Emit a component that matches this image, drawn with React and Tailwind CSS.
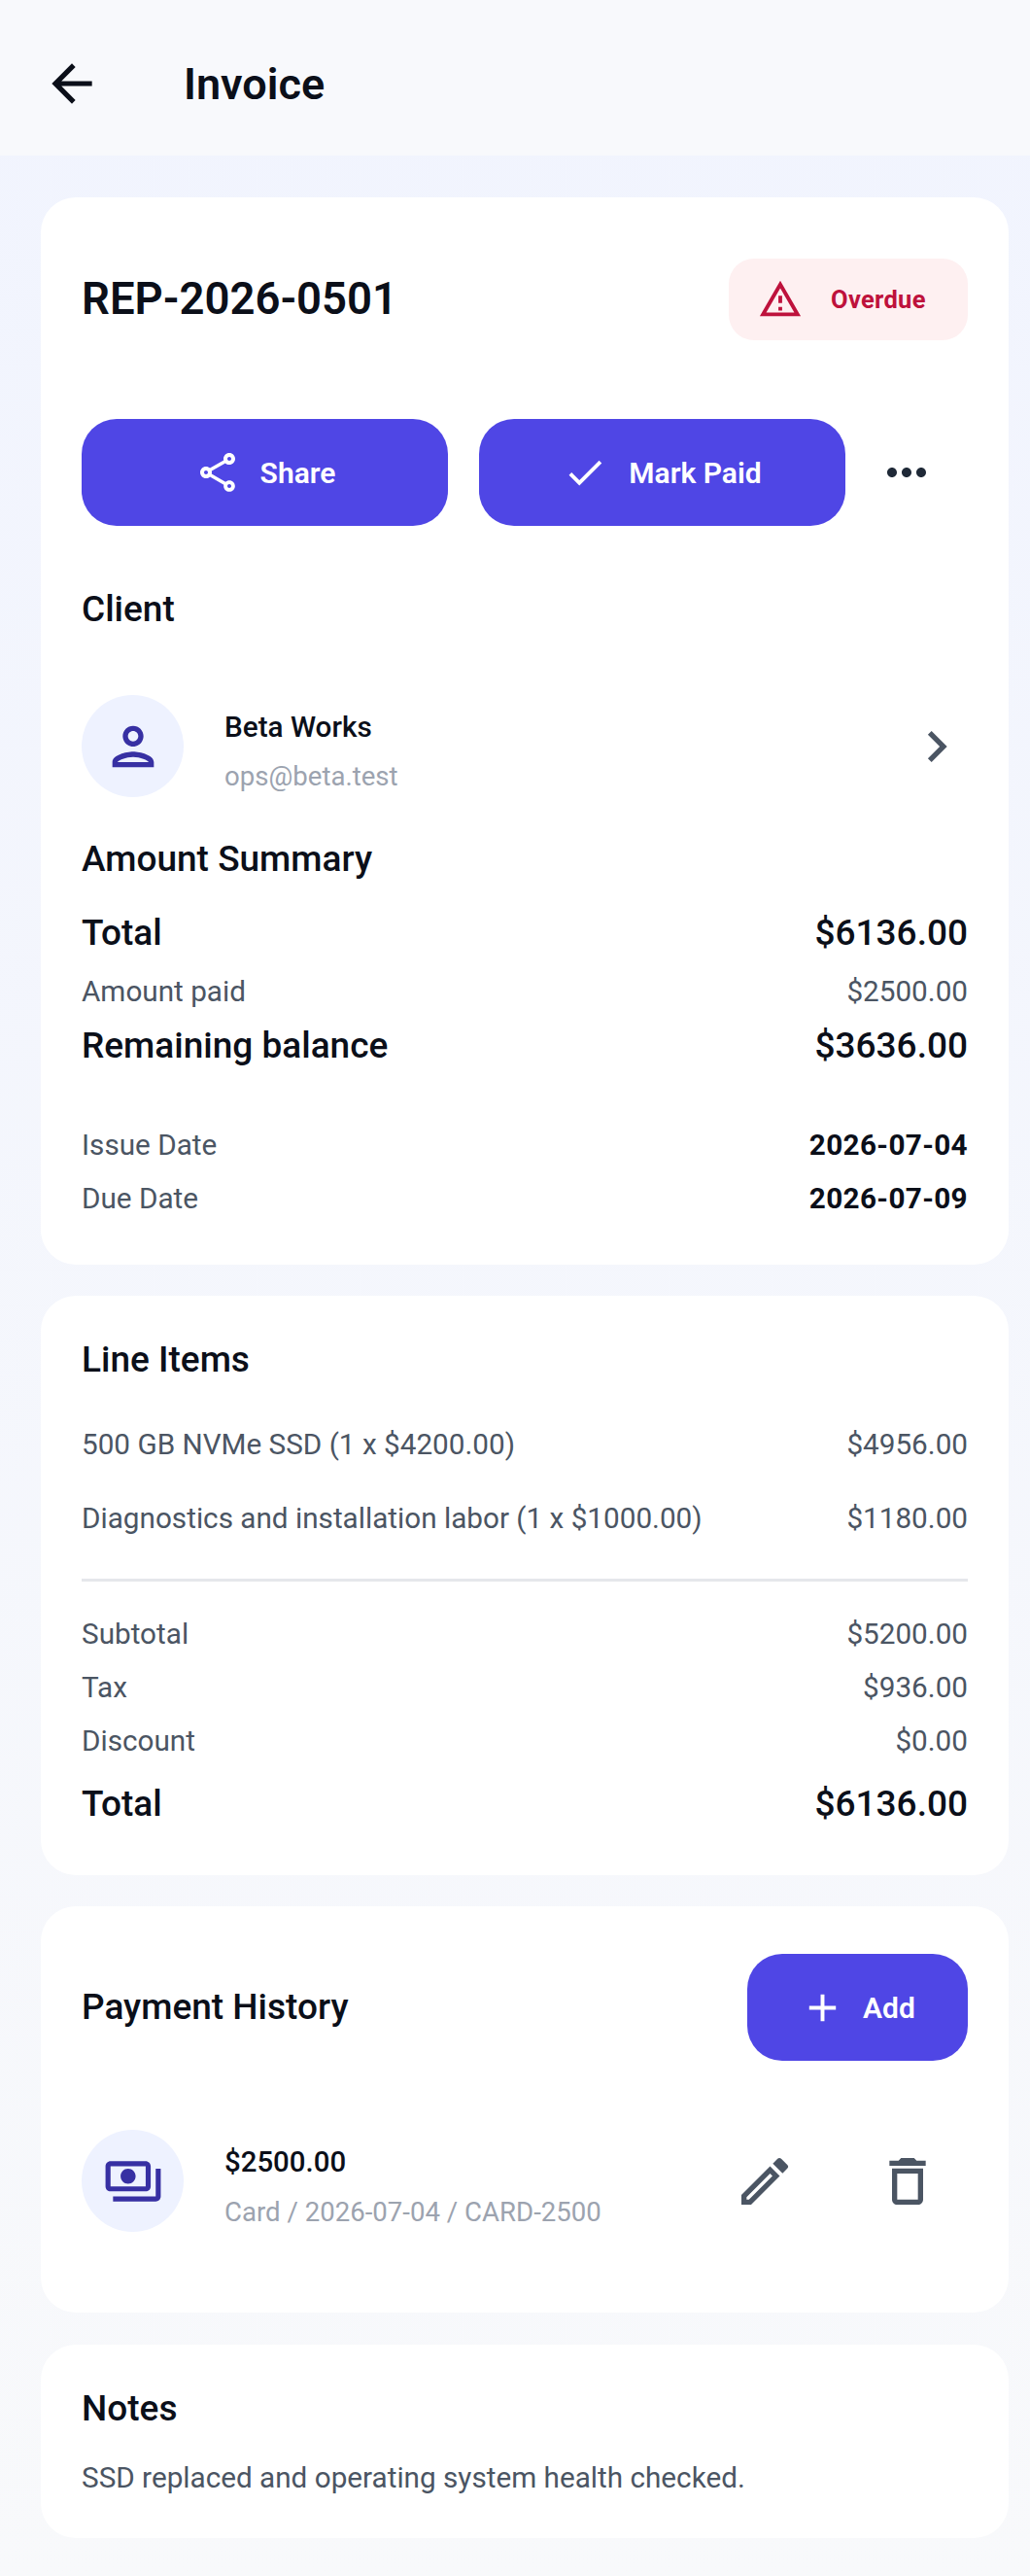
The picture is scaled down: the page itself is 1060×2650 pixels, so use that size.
import {
  MdArrowBack,
  MdOutlineWarningAmber,
  MdOutlineShare,
  MdCheck,
  MdMoreHoriz,
  MdOutlinePerson,
  MdChevronRight,
  MdAdd,
  MdOutlinePayments,
  MdOutlineEdit,
  MdOutlineDelete,
} from 'react-icons/md';

function Row({ label, value, className = '', strong = false, date = false }) {
  if (strong) {
    return (
      <div className={`flex justify-between text-[37px] leading-[42px] font-medium text-[#0b0f19] ${className}`}>
        <span>{label}</span>
        <span>{value}</span>
      </div>
    );
  }
  return (
    <div className={`flex justify-between text-[29.7px] leading-[36px] text-[#4b5563] ${className}`}>
      <span>{label}</span>
      <span className={date ? 'font-bold text-[#0b0f19] tracking-[0.35px]' : ''}>{value}</span>
    </div>
  );
}

function Card({ className = '', children }) {
  return <section className={`bg-white rounded-[36px] px-[42px] ${className}`}>{children}</section>;
}

function PrimaryButton({ icon, label, className = '' }) {
  return (
    <button className={`flex items-center justify-center bg-[#4f46e5] text-white h-[110px] rounded-[36px] text-[30px] font-semibold ${className}`}>
      {icon}
      <span>{label}</span>
    </button>
  );
}

export default function App() {
  return (
    <div className="w-[1060px] h-[2650px] overflow-hidden bg-gradient-to-b from-[#f1f4fe] to-[#f8f9fb] font-['Roboto',sans-serif]">
      {/* Header */}
      <header className="h-[160px] bg-[#f8f9fc] flex items-center pl-[43px] pt-[12px]">
        <MdArrowBack className="w-[62px] h-[62px] text-[#0b0f19]" />
        <h1 className="ml-[84px] text-[45px] font-semibold text-[#0b0f19] leading-none">Invoice</h1>
      </header>

      <main className="pl-[42px] pr-[22px] pt-[43px]">
        {/* Summary */}
        <Card className="pt-[63px] pb-[50px]">
          <div className="flex items-center justify-between">
            <h2 className="text-[45.5px] font-semibold text-[#0b0f19] leading-none">REP-2026-0501</h2>
            <div className="flex items-center h-[84px] w-[246px] pl-[30px] rounded-[26px] bg-[#fef0f1] text-[#be123c]">
              <MdOutlineWarningAmber className="w-[46px] h-[46px]" />
              <span className="ml-[29px] text-[25.5px] font-bold tracking-[0.3px]">Overdue</span>
            </div>
          </div>

          <div className="flex items-center mt-[81px]">
            <PrimaryButton
              className="w-[377px]"
              label="Share"
              icon={<MdOutlineShare className="w-[48px] h-[48px] mr-[20px]" />}
            />
            <PrimaryButton
              className="w-[377px] ml-[32px]"
              label="Mark Paid"
              icon={<MdCheck className="w-[46px] h-[46px] mr-[22px]" />}
            />
            <MdMoreHoriz className="w-[60px] h-[60px] ml-[33px] text-[#1f2937]" />
          </div>

          <h3 className="mt-[65px] text-[37px] leading-[42px] font-medium text-[#0b0f19]">Client</h3>
          <div className="flex items-center mt-[67px]">
            <div className="w-[105px] h-[105px] rounded-full bg-[#eef2ff] flex items-center justify-center">
              <MdOutlinePerson className="w-[64px] h-[64px] text-[#3730a3]" />
            </div>
            <div className="ml-[42px] flex-1 pt-[12px]">
              <div className="text-[29.7px] leading-[36px] font-medium text-[#0b0f19]">Beta Works</div>
              <div className="mt-[15px] text-[27.6px] leading-[36px] text-[#9ca3af]">ops@beta.test</div>
            </div>
            <MdChevronRight className="w-[64px] h-[64px] text-[#4b5563]" />
          </div>

          <h3 className="mt-[43px] text-[37px] leading-[42px] font-medium text-[#0b0f19]">Amount Summary</h3>
          <Row strong className="mt-[34px]" label="Total" value="$6136.00" />
          <Row className="mt-[21px]" label="Amount paid" value="$2500.00" />
          <Row strong className="mt-[17px]" label="Remaining balance" value="$3636.00" />
          <Row date className="mt-[63px]" label="Issue Date" value="2026-07-04" />
          <Row date className="mt-[19px]" label="Due Date" value="2026-07-09" />
        </Card>

        {/* Line items */}
        <Card className="mt-[32px] pt-[45px] pb-[52px]">
          <h3 className="text-[37px] leading-[42px] font-medium text-[#0b0f19]">Line Items</h3>
          <Row className="mt-[48px]" label="500 GB NVMe SSD (1 x $4200.00)" value="$4956.00" />
          <Row className="mt-[40px]" label="Diagnostics and installation labor (1 x $1000.00)" value="$1180.00" />
          <div className="mt-[44px] h-[3px] bg-[#e5e7eb]" />
          <Row className="mt-[36px]" label="Subtotal" value="$5200.00" />
          <Row className="mt-[19px]" label="Tax" value="$936.00" />
          <Row className="mt-[19px]" label="Discount" value="$0.00" />
          <Row strong className="mt-[26px]" label="Total" value="$6136.00" />
        </Card>

        {/* Payments */}
        <Card className="mt-[32px] pt-[49px] pb-[83px]">
          <div className="flex items-center justify-between">
            <h3 className="text-[37px] leading-[42px] font-medium text-[#0b0f19]">Payment History</h3>
            <PrimaryButton
              className="w-[227px]"
              label="Add"
              icon={<MdAdd className="w-[47px] h-[47px] mr-[18px]" />}
            />
          </div>
          <div className="flex items-center mt-[71px]">
            <div className="w-[105px] h-[105px] rounded-full bg-[#eef2ff] flex items-center justify-center">
              <MdOutlinePayments className="w-[62px] h-[62px] text-[#3730a3]" />
            </div>
            <div className="ml-[42px] flex-1 pt-[13px]">
              <div className="text-[29.4px] leading-[36px] font-medium text-[#0b0f19]">$2500.00</div>
              <div className="mt-[16px] text-[27.6px] leading-[36px] text-[#9ca3af]">Card / 2026-07-04 / CARD-2500</div>
            </div>
            <MdOutlineEdit className="w-[64px] h-[64px] text-[#4b5563]" />
            <MdOutlineDelete className="w-[64px] h-[64px] ml-[83px] mr-[30px] text-[#4b5563]" />
          </div>
        </Card>

        {/* Notes */}
        <Card className="mt-[33px] pt-[45px] pb-[44px]">
          <h3 className="text-[37px] leading-[42px] font-medium text-[#0b0f19]">Notes</h3>
          <p className="mt-[32px] text-[29.7px] leading-[36px] text-[#4b5563]">SSD replaced and operating system health checked.</p>
        </Card>
      </main>
    </div>
  );
}
